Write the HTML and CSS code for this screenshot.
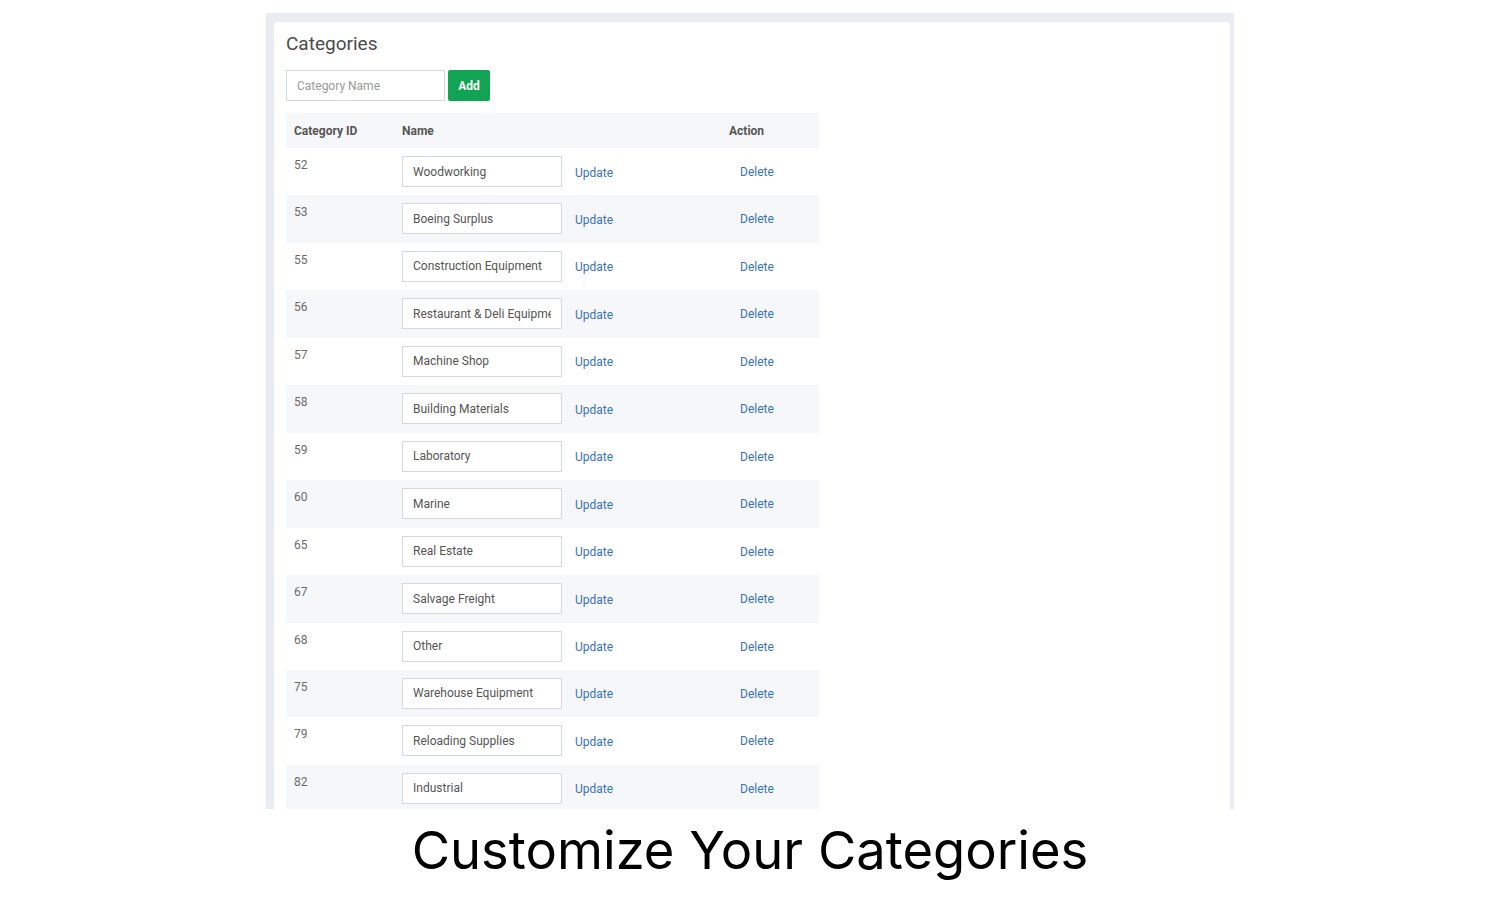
FILE: index.html
```html
<!DOCTYPE html>
<html lang="en">
<head>
    <meta charset="UTF-8">
    <title>Categories</title>
    <link rel="stylesheet" href="styles.css">
</head>
<body>
    <div class="frame">
        <div class="card">
            <h1 class="title">Categories</h1>
            <div class="add-form">
                <input type="text" placeholder="Category Name">
                <button>Add</button>
            </div>
            <table class="cats">
                <thead>
                    <tr>
                        <th class="col-id">Category ID</th>
                        <th class="col-name">Name</th>
                        <th class="col-action">Action</th>
                    </tr>
                </thead>
                <tbody>
                    <tr><td>52</td><td><input type="text" value="Woodworking"><a href="#">Update</a></td><td><a href="#" class="del">Delete</a></td></tr>
                    <tr><td>53</td><td><input type="text" value="Boeing Surplus"><a href="#">Update</a></td><td><a href="#" class="del">Delete</a></td></tr>
                    <tr><td>55</td><td><input type="text" value="Construction Equipment"><a href="#">Update</a></td><td><a href="#" class="del">Delete</a></td></tr>
                    <tr><td>56</td><td><input type="text" value="Restaurant &amp; Deli Equipment"><a href="#">Update</a></td><td><a href="#" class="del">Delete</a></td></tr>
                    <tr><td>57</td><td><input type="text" value="Machine Shop"><a href="#">Update</a></td><td><a href="#" class="del">Delete</a></td></tr>
                    <tr><td>58</td><td><input type="text" value="Building Materials"><a href="#">Update</a></td><td><a href="#" class="del">Delete</a></td></tr>
                    <tr><td>59</td><td><input type="text" value="Laboratory"><a href="#">Update</a></td><td><a href="#" class="del">Delete</a></td></tr>
                    <tr><td>60</td><td><input type="text" value="Marine"><a href="#">Update</a></td><td><a href="#" class="del">Delete</a></td></tr>
                    <tr><td>65</td><td><input type="text" value="Real Estate"><a href="#">Update</a></td><td><a href="#" class="del">Delete</a></td></tr>
                    <tr><td>67</td><td><input type="text" value="Salvage Freight"><a href="#">Update</a></td><td><a href="#" class="del">Delete</a></td></tr>
                    <tr><td>68</td><td><input type="text" value="Other"><a href="#">Update</a></td><td><a href="#" class="del">Delete</a></td></tr>
                    <tr><td>75</td><td><input type="text" value="Warehouse Equipment"><a href="#">Update</a></td><td><a href="#" class="del">Delete</a></td></tr>
                    <tr><td>79</td><td><input type="text" value="Reloading Supplies"><a href="#">Update</a></td><td><a href="#" class="del">Delete</a></td></tr>
                    <tr><td>82</td><td><input type="text" value="Industrial"><a href="#">Update</a></td><td><a href="#" class="del">Delete</a></td></tr>
                </tbody>
            </table>
        </div>
    </div>
    <p class="caption">Customize Your Categories</p>
</body>
</html>
```

FILE: styles.css
```css
* {
    margin: 0;
    padding: 0;
    box-sizing: border-box;
}

body {
    background: #fff;
    font-family: Roboto, "Liberation Sans", sans-serif;
    padding-top: 13px;
}

.frame {
    width: 968px;
    height: 796px;
    margin: 0 auto;
    background: #e9edf2;
    padding: 9px 4px 0 8px;
    overflow: hidden;
}

.card {
    background: #fff;
    border-radius: 4px 4px 0 0;
    padding: 12px 12px 0 12px;
    height: 100%;
}

.title {
    font-size: 19px;
    font-weight: 400;
    color: #4a4a4a;
    line-height: 20px;
}

.add-form {
    display: flex;
    gap: 3px;
    margin-top: 16px;
}

.add-form input {
    width: 159px;
    height: 31px;
    border: 1px solid #d6d9dc;
    padding: 0 10px;
    font-family: Roboto, sans-serif;
    font-size: 12px;
    color: #555;
}

.add-form input::placeholder {
    color: #999;
}

.add-form button {
    width: 42px;
    height: 31px;
    border: 0;
    border-radius: 2px;
    background: #11a454;
    color: #fff;
    font-family: Roboto, sans-serif;
    font-weight: 700;
    font-size: 12px;
}

.cats {
    width: 533px;
    border-collapse: collapse;
    margin-top: 12px;
    font-size: 12px;
    color: #6a6a6a;
}

.cats th {
    background: #f6f7f8;
    text-align: left;
    font-weight: 700;
    color: #555;
    height: 35px;
    padding: 0 8px;
}

.col-id {
    width: 108px;
}

.col-action {
    width: 98px;
}

.cats td {
    height: 47.46px;
    padding: 8px;
    vertical-align: top;
}

.cats tbody tr:nth-child(even) td {
    background: #f6f7f8;
}

.cats td:first-child {
    padding-top: 10px;
}

.cats td input {
    width: 160px;
    height: 31px;
    border: 1px solid #d6d9dc;
    padding: 0 10px;
    font-family: Roboto, sans-serif;
    font-size: 12px;
    color: #555;
    vertical-align: middle;
}

.cats a {
    color: #3a72b5;
    text-decoration: none;
    margin-left: 13px;
    vertical-align: middle;
    position: relative;
    top: 1px;
}

.cats a.del {
    display: inline-block;
    margin-left: 11px;
    margin-top: 8px;
}

.caption {
    text-align: center;
    font-family: Inter, "Open Sans", sans-serif;
    font-weight: 400;
    font-size: 52.5px;
    color: #000;
    margin-top: 9px;
    line-height: 64px;
}
```
